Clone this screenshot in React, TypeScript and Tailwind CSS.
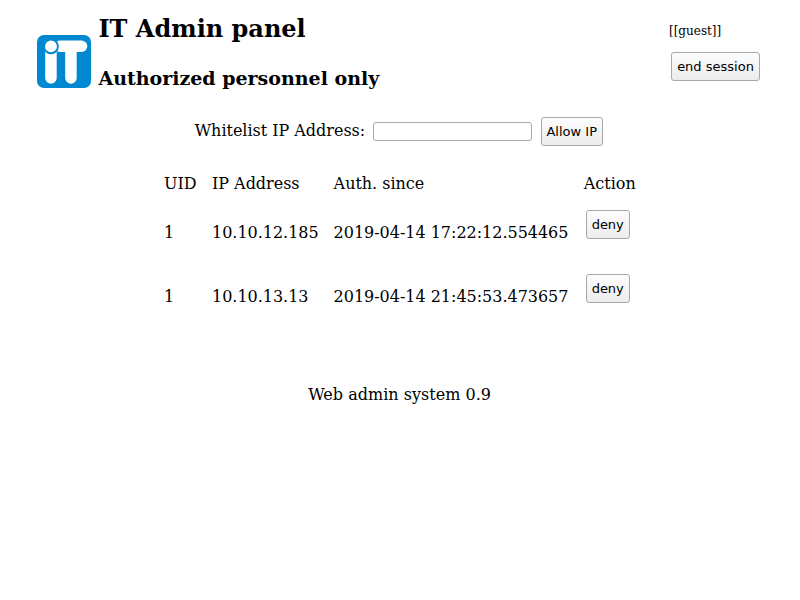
import React from 'react';

const buttonStyle =
  "box-border h-[29px] shrink-0 rounded-[3px] border border-[#a9a9a9] bg-linear-to-b from-[#fdfdfd] to-[#ececec] text-center font-['DejaVu_Sans',sans-serif] text-[13px] leading-[27px] whitespace-nowrap text-black";

function Logo() {
  return (
    <svg className="h-[54px] w-[54px] shrink-0" viewBox="0 0 54 54" aria-label="IT">
      <rect x="0" y="1" width="54" height="53" rx="7" fill="#0088d1" />
      <path d="M8.200 17h11.500v27a5.750 5.750 0 0 1-11.500 0z" fill="#fff" />
      <rect x="17" y="6.500" width="33.300" height="11.500" rx="5.750" fill="#fff" />
      <path d="M28.200 15h11.500v29a5.750 5.750 0 0 1-11.500 0z" fill="#fff" />
      <circle cx="14" cy="12.400" r="6.900" fill="#fff" stroke="#0088d1" strokeWidth="1.900" />
    </svg>
  );
}

const rows = [
  { uid: 1, ip: '10.10.12.185', since: '2019-04-14 17:22:12.554465' },
  { uid: 1, ip: '10.10.13.13', since: '2019-04-14 21:45:53.473657' },
];

export default function App() {
  return (
    <div className="h-[600px] w-[800px] overflow-hidden bg-white font-['DejaVu_Serif',serif] text-[16px] leading-[19px] text-black">
      <header className="flex h-[106px] pl-[37px]">
        <div className="pt-[34px]"><Logo /></div>
        <div className="w-[578px] pt-[15px] pl-[7.400px]">
          <h1 className="text-[24px] leading-[28px] font-bold">IT Admin panel</h1>
          <h2 className="mt-[24px] text-[19px] leading-[22px] font-bold">Authorized personnel only</h2>
        </div>
        <div className="pt-[24px]">
          <div className="text-[12px] leading-[15px]">[[guest]]</div>
          <button className={buttonStyle + ' mt-[13px] ml-[2px] block w-[89px]'}>end session</button>
        </div>
      </header>
      <form className="flex h-[61px] pt-[11px] pl-[194.700px]" onSubmit={(e) => e.preventDefault()}>
        <label htmlFor="ip" className="w-[178.300px] pt-[4px] tracking-[-0.020px] whitespace-nowrap">Whitelist IP Address:</label>
        <input id="ip" className="mt-[5px] h-[19px] w-[159px] rounded-[3px] border border-[#a9a9a9] bg-white px-1 text-[13px]" />
        <button className={buttonStyle + ' ml-[9px] w-[62px] pr-[0.500px]'}>Allow IP</button>
      </form>
      <main className="grid grid-cols-[48px_121.600px_250.200px_60.200px] pl-[164px] tracking-[-0.020px] whitespace-nowrap">
        <div className="h-[43px] pt-[7px]">UID</div>
        <div className="pt-[7px]">IP Address</div>
        <div className="pt-[7px]">Auth. since</div>
        <div className="pt-[7px]">Action</div>
        {rows.map((row) => (
          <React.Fragment key={row.ip}>
            <div className="h-[64px] pt-[13px]">{row.uid}</div>
            <div className="pt-[13px]">{row.ip}</div>
            <div className="pt-[13px]">{row.since}</div>
            <div><button className={buttonStyle + ' ml-[2.200px] block w-[44px] pr-[0.500px]'}>deny</button></div>
          </React.Fragment>
        ))}
      </main>
      <footer className="pt-[47px] pr-[0.800px] text-center tracking-[0.020px]">Web admin system 0.9</footer>
    </div>
  );
}
